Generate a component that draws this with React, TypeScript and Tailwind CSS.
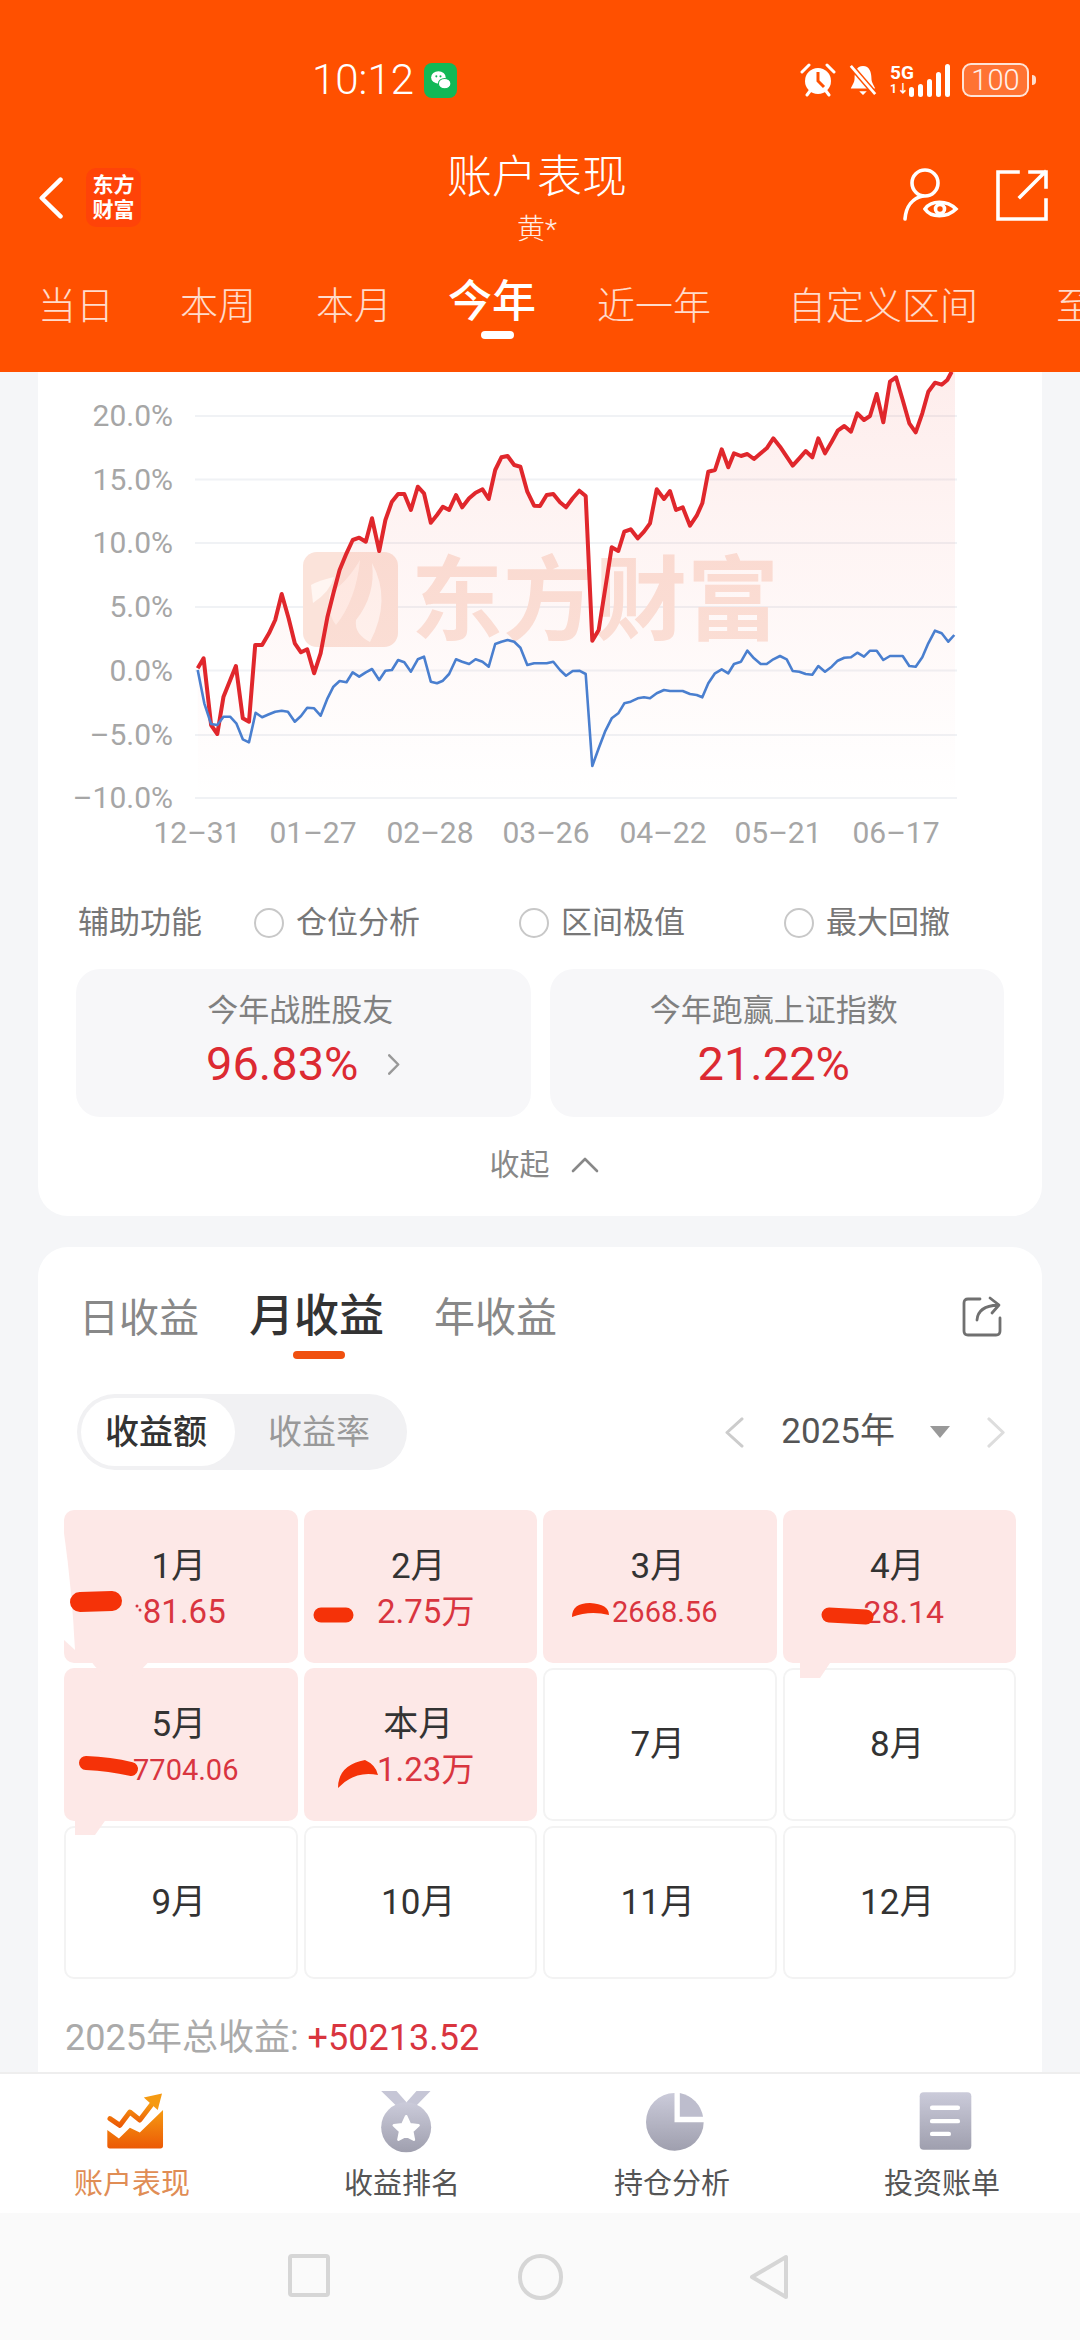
const redLeft = [[458,895],[475,865],[497,1065],[515,1092],[533,980],[569,888],[589,1045],[607,1055],[625,825],[645,825],[665,790],[683,750],[702,672],[722,745],[740,820],[758,847],[776,838],[796,910],[815,850],[835,740],[852,670],[870,600],[890,550],[908,510],[927,503],[946,515],[964,445],[985,543],[1003,450],[1022,395],[1040,372],[1058,372],[1077,420],[1097,350],[1115,370],[1135,458],[1153,435],[1170,410],[1188,420],[1208,375],[1226,412],[1246,385],[1265,368],[1285,358],[1303,387],[1322,300],[1340,262],[1358,258],[1377,285],[1395,290],[1415,365],[1435,407]];
const redRight = [[0,408],[20,375],[40,372],[60,397],[78,412],[98,385],[118,362],[137,378],[157,812],[176,780],[195,660],[215,532],[235,543],[253,485],[272,478],[293,505],[312,485],[330,460],[350,358],[372,387],[390,363],[408,420],[428,412],[450,467],[470,437],[487,400],[505,305],[525,300],[545,238],[565,292],[582,250],[603,258],[622,252],[642,267],[662,250],[680,235],[700,205],[720,230],[740,260],[758,287],[778,265],[797,243],[817,262],[835,205],[855,250],[875,215],[893,182],[913,168],[933,185],[952,130],[972,150],[990,138],[1010,72],[1030,157],[1050,35],[1068,22],[1088,90],[1108,160],[1127,187],[1147,130],[1165,65],[1185,38],[1205,44],[1222,30],[1235,5]];
const blueLeft = [[458,900],[477,1000],[497,1062],[515,1065],[533,1040],[552,1040],[570,1060],[589,1108],[607,1117],[626,1028],[645,1042],[665,1033],[683,1025],[702,1022],[720,1025],[740,1055],[758,1038],[776,1013],[796,1015],[815,1037],[835,985],[852,950],[870,933],[890,937],[908,907],[927,920],[946,907],[964,897],[985,930],[1003,902],[1022,900],[1040,870],[1058,877],[1077,905],[1097,868],[1115,860],[1135,935],[1153,940],[1170,932],[1188,912],[1208,868],[1226,875],[1246,882],[1265,868],[1285,875],[1303,890],[1322,822],[1340,815],[1358,810],[1377,815],[1395,833],[1415,885],[1435,880]];
const blueRight = [[0,880],[20,880],[40,875],[60,900],[78,917],[98,903],[118,902],[137,912],[157,1188],[176,1135],[195,1085],[215,1045],[235,1030],[253,1000],[272,995],[293,985],[312,982],[330,985],[350,970],[372,960],[390,963],[408,963],[428,963],[450,972],[470,975],[487,982],[505,940],[525,910],[545,898],[565,910],[582,882],[603,875],[622,842],[642,865],[662,882],[680,882],[700,868],[720,858],[740,868],[758,903],[778,905],[797,912],[817,914],[835,888],[855,905],[875,890],[893,872],[913,863],[933,862],[952,848],[972,860],[990,842],[1010,842],[1030,870],[1050,858],[1068,858],[1088,858],[1108,888],[1127,890],[1147,862],[1165,820],[1185,782],[1205,790],[1225,815],[1243,795]];

const toPage = (left: number[][], right: number[][]) => [
  ...left.map(([x, y]) => [40 + x / 2.904, 370 + y / 3]),
  ...right.map(([x, y]) => [540 + x / 3, 370 + y / 3]),
];
const pts = (list: number[][]) => list.map(([x, y]) => `${x.toFixed(1)},${y.toFixed(1)}`).join(" ");
const red = toPage(redLeft, redRight);
const blue = toPage(blueLeft, blueRight);

const yAxis = [
  { label: "20.0%", y: 416 },
  { label: "15.0%", y: 479.5 },
  { label: "10.0%", y: 543 },
  { label: "5.0%", y: 607 },
  { label: "0.0%", y: 670.5 },
  { label: "–5.0%", y: 735 },
  { label: "–10.0%", y: 798 },
];
const xAxis = [
  { label: "12–31", x: 197 },
  { label: "01–27", x: 313 },
  { label: "02–28", x: 430 },
  { label: "03–26", x: 546 },
  { label: "04–22", x: 663 },
  { label: "05–21", x: 778 },
  { label: "06–17", x: 896 },
];

const tabs = [
  { label: "当日", cls: "ml-0" },
  { label: "本周", cls: "ml-[66px]" },
  { label: "本月", cls: "ml-[60px]" },
  { label: "今年", cls: "ml-[56px]", active: true },
  { label: "近一年", cls: "ml-[61px]" },
  { label: "自定义区间", cls: "ml-[77px]" },
  { label: "至今", cls: "ml-[78px]" },
];

const months = [
  { label: "1月", value: "81.65", cls: "pl-[11px] text-[33px]", on: true },
  { label: "2月", value: "2.75万", cls: "pl-[15px] text-[33px]", on: true },
  { label: "3月", value: "2668.56", cls: "pl-[14px] text-[29px]", on: true },
  { label: "4月", value: "28.14", cls: "pl-[13px] text-[32px]", on: true },
  { label: "5月", value: "7704.06", cls: "pl-[14px] text-[29px]", on: true },
  { label: "本月", value: "1.23万", cls: "pl-[15px] text-[33px]", on: true },
  { label: "7月" },
  { label: "8月" },
  { label: "9月" },
  { label: "10月" },
  { label: "11月" },
  { label: "12月" },
];

const helpers = ["仓位分析", "区间极值", "最大回撤"];

const Chevron = ({ dir, className, width = 3 }: { dir: "left" | "right"; className: string; width?: number }) => (
  <svg viewBox="0 0 20 32" preserveAspectRatio="none" className={className} fill="none" stroke="currentColor" strokeWidth={width} strokeLinecap="round" strokeLinejoin="round">
    {dir === "left" && <path d="M18 2 L3 16 L18 30" vectorEffect="non-scaling-stroke" />}
    {dir === "right" && <path d="M2 2 L17 16 L2 30" vectorEffect="non-scaling-stroke" />}
  </svg>
);

const IconDefs = () => (
  <svg className="absolute w-0 h-0">
    <defs>
      <linearGradient id="navGray" x1="0" y1="0" x2="0" y2="1">
        <stop offset="0" stopColor="#cbcbda" />
        <stop offset="1" stopColor="#9f9fae" />
      </linearGradient>
      <linearGradient id="navOrange" x1="0" y1="0" x2="0" y2="1">
        <stop offset="0" stopColor="#f59a12" />
        <stop offset="1" stopColor="#ec5a06" />
      </linearGradient>
    </defs>
  </svg>
);

const navItems = [
  {
    label: "账户表现",
    color: "text-[#e08d55]",
    icon: (
      <svg viewBox="40 25 190 180" className="w-[63px] h-[60px]">
        <path d="M50 142 L85 168 L118 135 L148 150 L218 82 V190 Q218 198 210 198 H58 Q50 198 50 190 Z" fill="url(#navOrange)" />
        <path d="M58 108 L88 128 L118 88 L148 112 L186 62" fill="none" stroke="url(#navOrange)" strokeWidth="15" strokeLinejoin="round" strokeLinecap="round" />
        <path d="M160 44 L215 32 L202 82 Z" fill="#f59a12" />
      </svg>
    ),
  },
  {
    label: "收益排名",
    color: "text-[#555555]",
    icon: (
      <svg viewBox="860 20 170 195" className="w-[57px] h-[65px]">
        <path d="M872 26 H918 L950 62 L925 78 Z M1020 26 H978 L946 62 L970 78 Z" fill="#c6c6d6" />
        <circle cx="947" cy="135" r="75" fill="url(#navGray)" />
        <path d="M947 102 L958 126 L984 129 L965 147 L970 172 L947 160 L924 172 L929 147 L910 129 L936 126 Z" fill="#fff" stroke="#fff" strokeWidth="8" strokeLinejoin="round" />
      </svg>
    ),
  },
  {
    label: "持仓分析",
    color: "text-[#555555]",
    icon: (
      <svg viewBox="40 25 190 185" className="w-[63px] h-[62px]">
        <path d="M132 33 A87 87 0 1 0 220 121 H132 Z" fill="url(#navGray)" />
        <path d="M148 33 A87 87 0 0 1 218 105 H148 Z" fill="#bdbdcd" />
      </svg>
    ),
  },
  {
    label: "投资账单",
    color: "text-[#555555]",
    icon: (
      <svg viewBox="860 25 170 185" className="w-[57px] h-[62px]">
        <rect x="868" y="32" width="154" height="171" rx="12" fill="url(#navGray)" />
        <path d="M905 78 H982 M905 118 H982 M905 156 H955" stroke="#fff" strokeWidth="13" strokeLinecap="round" />
      </svg>
    ),
  },
];

const StatusIcons = () => (
  <div className="flex items-center gap-[12px] text-white">
    <svg viewBox="0 0 36 36" className="w-[36px] h-[36px]">
      <circle cx="18" cy="19" r="13" fill="#fff" />
      <path d="M18 10 V19 L24 25" fill="none" stroke="#ff5000" strokeWidth="3" />
      <path d="M2 10 L9 3 M34 10 L27 3 M7 33 L10 29 M29 33 L26 29" stroke="#fff" strokeWidth="3" strokeLinecap="round" />
    </svg>
    <svg viewBox="0 0 32 36" className="w-[30px] h-[34px]">
      <path d="M16 3 C9 3 7 10 7 16 C7 21 4 24 3 27 H29 C28 24 25 21 25 16 C25 10 23 3 16 3 Z M12 30 H20 L16 34 Z" fill="#fff" />
      <path d="M3 3 L29 33" stroke="#ff5000" strokeWidth="6" />
      <path d="M3 3 L29 33" stroke="#fff" strokeWidth="3" />
    </svg>
    <div className="flex items-end">
      <div className="w-[19px] flex flex-col items-start leading-none whitespace-nowrap">
        <span className="text-[19px] font-bold leading-[19px]">5G</span>
        <span className="text-[12px] font-bold leading-[15px]">1↓</span>
      </div>
      <div className="flex items-end gap-[4px] h-[33px]">
        <div className="w-[5px] h-[10px] bg-white rounded-sm" />
        <div className="w-[5px] h-[13px] bg-white rounded-sm" />
        <div className="w-[5px] h-[18px] bg-white rounded-sm" />
        <div className="w-[5px] h-[25px] bg-white rounded-sm" />
        <div className="w-[5px] h-[33px] bg-white rounded-sm" />
      </div>
    </div>
    <div className="flex items-center gap-[3px]">
      <div className="w-[67px] h-[34px] rounded-[9px] border-2 border-white/80 bg-white/20 flex items-center justify-center text-[29px] font-light leading-none text-white/90">
        100
      </div>
      <div className="w-[4px] h-[10px] rounded-r bg-white/80" />
    </div>
  </div>
);

export default function App() {
  return (
    <div className="w-[1080px] h-[2340px] flex flex-col overflow-hidden bg-[#f5f6f8] [font-family:Roboto,'Noto_Sans_CJK_SC',sans-serif]">
      <IconDefs />
      {/* Orange header */}
      <header className="h-[372px] shrink-0 bg-[#ff5000] text-white">
        <div className="h-[60px] mt-[50px] flex items-center justify-between pl-[312px] pr-[44px]">
          <div className="flex items-center gap-[10px]">
            <span className="text-[42px] font-light leading-none">10:12</span>
            <div className="w-[33px] h-[35px] rounded-[8px] bg-[#12b856] flex items-center justify-center">
              <svg viewBox="0 0 24 24" className="w-[25px] h-[25px]">
                <ellipse cx="10" cy="9" rx="7" ry="6" fill="#fff" />
                <ellipse cx="16" cy="15" rx="6" ry="5" fill="#fff" stroke="#12b856" />
                <circle cx="8" cy="8" r="1" fill="#12b856" />
                <circle cx="12" cy="8" r="1" fill="#12b856" />
              </svg>
            </div>
          </div>
          <StatusIcons />
        </div>

        <div className="h-[100px] mt-[36px] grid grid-cols-[1fr_auto_1fr] items-start pl-[38px] pr-[32px]">
          <div className="flex items-center mt-[22px]">
            <Chevron dir="left" className="w-[25px] h-[42px]" width={4.5} />
            <div className="w-[55px] h-[59px] ml-[23px] rounded-[10px] bg-[#ff4308] flex flex-col items-center justify-center text-[21px] font-bold leading-[25px]">
              <span>东方</span>
              <span>财富</span>
            </div>
          </div>
          <div className="flex flex-col items-center pr-[12px] pt-[4px]">
            <span className="text-[45px] leading-[56px] font-light">账户表现</span>
            <span className="mt-[4px] text-[28px] leading-[40px] font-light text-white/90">黄*</span>
          </div>
          <div className="flex items-center justify-end gap-[37px] mt-[22px]">
            <svg viewBox="0 0 56 54" className="w-[56px] h-[54px]" fill="none" stroke="#fff" strokeWidth="3.6" strokeLinecap="round">
              <circle cx="22" cy="15" r="13" />
              <path d="M2 51 C3 38 10 30 20 28" />
              <path d="M22 41 C28 32 44 32 53 41 C44 50 28 50 22 41 Z" fill="#ff5000" />
              <circle cx="37" cy="41" r="4.5" />
            </svg>
            <svg viewBox="0 0 52 52" className="w-[52px] h-[52px]" fill="none" stroke="#fff" strokeWidth="3.6" strokeLinecap="square">
              <path d="M22 3 H2 V50 H50 V31" />
              <path d="M24 28 L49 3 M34 3 H50 V18" />
            </svg>
          </div>
        </div>

        <div className="mt-[30px] pl-[38px] flex items-baseline whitespace-nowrap overflow-hidden h-[72px]">
          {tabs.map((t) => (
            <div
              key={t.label}
              className={`${t.cls} relative shrink-0 ${t.active ? "text-[44px] font-medium leading-[52px]" : "text-[38px] leading-[52px] text-white/80 font-light translate-y-[2px]"}`}
            >
              {t.label}
              {t.active && <div className="absolute left-[33px] top-[55px] w-[33px] h-[8px] rounded-full bg-white" />}
            </div>
          ))}
        </div>
      </header>

      {/* Scrolled content */}
      <main className="flex-1 overflow-hidden px-[38px]">
        <section className="bg-white rounded-b-[30px] h-[844px]">
          <svg viewBox="38 372 1004 488" className="block w-[1004px] h-[488px] text-[30px]">
            <defs>
              <linearGradient id="areaFill" gradientUnits="userSpaceOnUse" x1="0" y1="372" x2="0" y2="800">
                <stop offset="0" stopColor="#f0382b" stopOpacity="0.09" />
                <stop offset="0.7" stopColor="#f0382b" stopOpacity="0.025" />
                <stop offset="1" stopColor="#f0382b" stopOpacity="0" />
              </linearGradient>
            </defs>
            {yAxis.map((a) => (
              <g key={a.label}>
                <line x1="195" x2="957" y1={a.y} y2={a.y} stroke="#f0f2f5" strokeWidth="2" />
                <text x="173" y={a.y + 10} textAnchor="end" fill="#a6a6a6">{a.label}</text>
              </g>
            ))}
            {xAxis.map((a) => (
              <text key={a.label} x={a.x} y="843" textAnchor="middle" fill="#a6a6a6">{a.label}</text>
            ))}
            <rect x="303" y="552" width="95" height="95" rx="14" fill="#fbe3da" />
            <path d="M311 585 Q320 580 334 577 Q330 592 313 603 Z" fill="#fff6f2" />
            <path d="M360 560 Q356 600 336 625 Q326 612 330 592 Q345 585 360 560 Z" fill="#fff0ea" />
            <path d="M372 563 Q392 600 370 642 Q354 634 356 620 Q376 595 372 563 Z" fill="#fff6f2" />
            <text x="411" y="633" fontSize="92" fontWeight="700" fill="#fbe3da">东方财富</text>
            <polygon points={`${pts(red)} 955,372 955,800 198,800`} fill="url(#areaFill)" />
            <polyline points={pts(red)} fill="none" stroke="#e0272c" strokeWidth="4" strokeLinejoin="round" />
            <polyline points={pts(blue)} fill="none" stroke="#4a7fcf" strokeWidth="2.6" strokeLinejoin="round" />
          </svg>

          <div className="mt-[43px] h-[40px] pl-[40px] flex items-center text-[31px] leading-[40px] text-[#777777]">
            <span className="w-[176px] shrink-0">辅助功能</span>
            {helpers.map((h) => (
              <div key={h} className="w-[265px] shrink-0 flex items-center gap-[12px]">
                <div className="w-[30px] h-[30px] rounded-full border-2 border-[#c8c8c8]" />
                <span>{h}</span>
              </div>
            ))}
          </div>

          <div className="mt-[26px] px-[38px] grid grid-cols-2 gap-[19px]">
            <div className="h-[148px] rounded-[24px] bg-[#f7f7f9] flex flex-col items-center pt-[22px] pr-[6px]">
              <span className="text-[31px] leading-[40px] text-[#808080]">今年战胜股友</span>
              <div className="flex items-center gap-[30px] ml-[6px] mt-[6px]">
                <span className="text-[47px] leading-[54px] text-[#dc2a32]">96.83%</span>
                <Chevron dir="right" className="w-[12px] h-[21px] text-[#999999]" width={2.5} />
              </div>
            </div>
            <div className="h-[148px] rounded-[24px] bg-[#f7f7f9] flex flex-col items-center pt-[22px] pr-[6px]">
              <span className="text-[31px] leading-[40px] text-[#808080]">今年跑赢上证指数</span>
              <span className="text-[47px] leading-[54px] text-[#dc2a32] mt-[6px]">21.22%</span>
            </div>
          </div>

          <div className="mt-[33px] flex items-center justify-center gap-[21px] pl-[8px] text-[30px] leading-[30px] text-[#888888]">
            <span>收起</span>
            <svg viewBox="0 0 28 16" className="w-[28px] h-[16px]" fill="none" stroke="#888888" strokeWidth="2.6" strokeLinecap="round" strokeLinejoin="round">
              <path d="M2 14 L14 2 L26 14" />
            </svg>
          </div>
        </section>

        <section className="mt-[31px] bg-white rounded-t-[30px] h-[900px]">
          <div className="pt-[43px] pl-[41px] pr-[40px] h-[147px] flex items-start justify-between">
            <div className="flex items-baseline gap-[50px]">
              <span className="text-[40px] leading-[54px] text-[#888888]">日收益</span>
              <span className="relative text-[45px] leading-[54px] font-medium text-[#333333]">
                月收益
                <span className="absolute left-[44px] top-[61px] w-[52px] h-[8px] rounded-full bg-[#f0500f]" />
              </span>
              <span className="text-[41px] leading-[54px] text-[#888888]">年收益</span>
            </div>
            <svg viewBox="0 0 40 42" className="w-[40px] h-[42px] mt-[6px]" fill="none" stroke="#707070" strokeWidth="2.8" strokeLinecap="round" strokeLinejoin="round">
              <path d="M18 3 H6 Q2 3 2 7 V35 Q2 39 6 39 H34 Q38 39 38 35 V22" />
              <path d="M15 24 Q16 10 36 9 M28 2 L37 9 L30 17" />
            </svg>
          </div>

          <div className="pl-[39px] pr-[36px] flex items-center justify-between">
            <div className="w-[330px] h-[76px] rounded-full bg-[#f1f1f3] p-[4px] flex items-center">
              <div className="w-[154px] h-[68px] rounded-full bg-white flex items-center justify-center pr-[4px] text-[34px] font-medium text-[#333333]">收益额</div>
              <div className="flex-1 text-center text-[34px] text-[#999999]">收益率</div>
            </div>
            <div className="flex items-center">
              <Chevron dir="left" className="w-[20px] h-[31px] text-[#cccccc]" />
              <span className="ml-[37px] text-[35px] text-[#555555]">2025年</span>
              <svg viewBox="0 0 20 12" className="ml-[35px] w-[20px] h-[12px]">
                <path d="M0 0 H20 L10 12 Z" fill="#999999" />
              </svg>
              <Chevron dir="right" className="ml-[37px] w-[19px] h-[31px] text-[#dddddd]" />
            </div>
          </div>

          <div className="relative mt-[40px] ml-[26px] w-[952px] grid grid-cols-4 gap-x-[6px] gap-y-[5px]">
            {months.map((m) => (
              <div
                key={m.label}
                className={`h-[153px] rounded-[10px] flex flex-col items-center pr-[4px] ${m.on ? "bg-[#fde8e7] justify-start pt-[35px]" : "bg-white border-2 border-[#f3f3f3] justify-center"}`}
              >
                <span className="text-[35px] leading-[44px] text-[#333333]">{m.label}</span>
                {m.value && (
                  <span className={`${m.cls} mt-[2px] leading-[42px] text-[#d9353f]`}>{m.value}</span>
                )}
              </div>
            ))}
            {/* hand-drawn redactions over the first values */}
            <svg viewBox="64 1510 952 469" className="absolute inset-0 w-[952px] h-[469px] pointer-events-none">
              <path d="M90 1660 H150 Q135 1680 115 1678 Q100 1675 90 1660 Z M800 1660 H832 L820 1678 H800 Z M75 1818 H107 L95 1835 H75 Z" fill="#fde8e7" />
              <path d="M64 1533 Q72 1590 75 1650 L64 1640 Z" fill="#fff" />
              <g fill="none" stroke="#f53208" strokeLinecap="round">
                <path d="M80 1602 L112 1601" strokeWidth="20" />
                <path d="M321 1615 L346 1615" strokeWidth="15" />
                <path d="M829 1615 L866 1617" strokeWidth="15" />
                <path d="M86 1763 Q110 1764 131 1769" strokeWidth="14" />
              </g>
              <circle cx="137" cy="1606" r="1.5" fill="#d9353f" />
              <circle cx="140" cy="1610" r="1.5" fill="#d9353f" />
              <path d="M572 1617 Q572 1603 590 1603 Q609 1604 609 1615 Q590 1610 572 1617 Z" fill="#f53208" />
              <path d="M338 1788 Q338 1765 365 1760 Q376 1765 378 1775 Q355 1770 338 1788 Z" fill="#f53208" />
            </svg>
          </div>

          <div className="mt-[39px] pl-[27px] text-[36px] leading-[40px] text-[#aaaaaa]">
            2025年总收益: <span className="text-[#d9353f]">+50213.52</span>
          </div>
        </section>
      </main>

      {/* Bottom tab bar */}
      <nav className="h-[141px] shrink-0 bg-white border-t-2 border-[#eeeeee] pt-[14px] grid grid-cols-4">
        {navItems.map((n) => (
          <div key={n.label} className="flex flex-col items-center">
            <div className="h-[66px] flex items-center justify-center">{n.icon}</div>
            <span className={`mt-[12px] mr-[6px] text-[29px] leading-[36px] ${n.color}`}>{n.label}</span>
          </div>
        ))}
      </nav>

      {/* System navigation */}
      <div className="h-[127px] shrink-0 bg-[#fafafa] flex items-start pt-[41px] pl-[288px]">
        <div className="w-[42px] h-[43px] rounded-[4px] border-4 border-[#d6d6d6]" />
        <div className="ml-[188px] w-[45px] h-[46px] rounded-full border-4 border-[#d6d6d6]" />
        <svg viewBox="0 0 40 46" className="ml-[186px] w-[40px] h-[46px]" fill="none" stroke="#d6d6d6" strokeWidth="4" strokeLinejoin="round">
          <path d="M37 3 V43 L3 23 Z" />
        </svg>
      </div>
    </div>
  );
}
